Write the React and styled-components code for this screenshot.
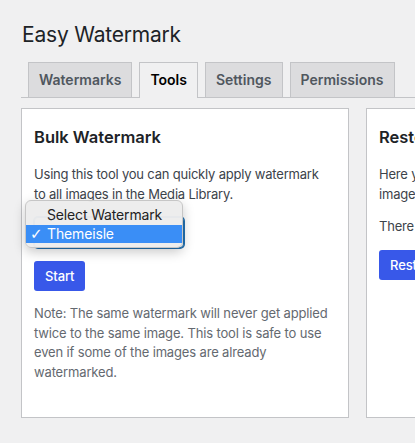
import React from "react"
import styled, { createGlobalStyle } from "styled-components"

const GlobalStyle = createGlobalStyle`
  html, body {
    margin: 0;
    padding: 0;
    background: #f0f0f1;
    overflow: hidden;
  }
  body {
    font-family: Inter, "Liberation Sans", sans-serif;
    color: #3c434a;
    font-size: 13px;
  }
`

const Wrap = styled.div`
  padding: 20px 0 0 21px;
  width: 800px;
`

const Title = styled.h1`
  margin: 0 0 0 1px;
  font-size: 21px;
  font-weight: 400;
  letter-spacing: -0.2px;
  line-height: 29px;
  color: #1d2327;
`

const TabBar = styled.nav`
  display: flex;
  margin-top: 13px;
  border-bottom: 1px solid #c3c4c7;
  height: 35px;
`

const Tab = styled.a`
  display: block;
  margin-left: 7px;
  padding: 5px 10px;
  height: 24px;
  line-height: 24px;
  font-size: 14px;
  font-weight: 600;
  border: 1px solid #c3c4c7;
  border-bottom: none;
  background: ${(p) => (p.$active ? "#f0f0f1" : "#dcdcde")};
  color: ${(p) => (p.$active ? "#000" : "#50575e")};
  ${(p) => p.$active && `
    height: 25px;
    margin-bottom: -1px;
  `}
`

const Cards = styled.div`
  display: grid;
  grid-template-columns: 328px 328px;
  gap: 17px;
  margin-top: 10px;
  align-items: stretch;
`

const Card = styled.div`
  background: #fff;
  border: 1px solid #c3c4c7;
  padding: 0 12px 27px 12px;
  box-sizing: border-box;
  height: 310px;
`

const CardTitle = styled.h2`
  margin: 17px 0 17px 0;
  font-size: 16.5px;
  font-weight: 600;
  line-height: 22px;
  color: #1d2327;
  white-space: nowrap;
`

const Text = styled.p`
  margin: ${(p) => (p.$first ? "0 0 13px 0" : "13px 0")};
  line-height: 19.5px;
  letter-spacing: ${(p) => (p.$muted ? "-0.15px" : "-0.2px")};
  color: ${(p) => (p.$muted ? "#646970" : "#3c434a")};
  white-space: nowrap;
`

const SelectWrap = styled.div`
  position: relative;
  width: 150px;
  margin: 11px 0 13px 0;
`

const SelectBox = styled.div`
  height: 31px;
  box-sizing: border-box;
  border: 1px solid #2271b1;
  box-shadow: 0 0 0 1px #2271b1;
  border-radius: 4px;
  background: #fff;
`

const Popup = styled.ul`
  position: absolute;
  left: -9px;
  top: -17px;
  width: 158px;
  margin: 0;
  padding: 5px 0 4px 0;
  list-style: none;
  box-sizing: border-box;
  background: rgba(236, 236, 236, 0.97);
  border: 1px solid #c6c6c6;
  border-radius: 6px;
  box-shadow: 0 4px 12px rgba(0, 0, 0, 0.22);
`

const Option = styled.li`
  position: relative;
  height: 18.5px;
  line-height: 18px;
  padding-left: 21px;
  font-size: 14px;
  letter-spacing: -0.15px;
  color: ${(p) => (p.$selected ? "#fff" : "#222")};
  background: ${(p) => (p.$selected ? "#3a8ef6" : "transparent")};
`

const Check = styled.span`
  position: absolute;
  left: 4px;
  top: 0;
  font-size: 15px;
  font-weight: 700;
  font-family: "DejaVu Sans", sans-serif;
`

const Button = styled.button`
  display: block;
  height: 30px;
  padding: 0 11px;
  border: none;
  border-radius: 3px;
  background: #3858e9;
  color: #fff;
  font-family: Inter, "Liberation Sans", sans-serif;
  font-size: 13px;
  font-weight: 500;
  letter-spacing: -0.1px;
  margin: 0;
`

export default function App() {
  return (
    <>
      <GlobalStyle />
      <Wrap>
        <Title>Easy Watermark</Title>
        <TabBar>
          <Tab>Watermarks</Tab>
          <Tab $active>Tools</Tab>
          <Tab>Settings</Tab>
          <Tab>Permissions</Tab>
        </TabBar>
        <Cards>
          <Card>
            <CardTitle>Bulk Watermark</CardTitle>
            <Text $first>
              Using this tool you can quickly apply watermark
              <br />
              to all images in the Media Library.
            </Text>
            <SelectWrap>
              <SelectBox />
              <Popup>
                <Option>Select Watermark</Option>
                <Option $selected>
                  <Check>✓</Check>Themeisle
                </Option>
              </Popup>
            </SelectWrap>
            <Button>Start</Button>
            <Text $muted>
              Note: The same watermark will never get applied
              <br />
              twice to the same image. This tool is safe to use
              <br />
              even if some of the images are already
              <br />
              watermarked.
            </Text>
          </Card>
          <Card>
            <CardTitle>Restore Original Images</CardTitle>
            <Text $first>
              Here you can restore original images for all watermarked
              <br />
              images in the Media Library.
            </Text>
            <Text>There are no backed up images.</Text>
            <Button>Restore</Button>
          </Card>
        </Cards>
      </Wrap>
    </>
  )
}
